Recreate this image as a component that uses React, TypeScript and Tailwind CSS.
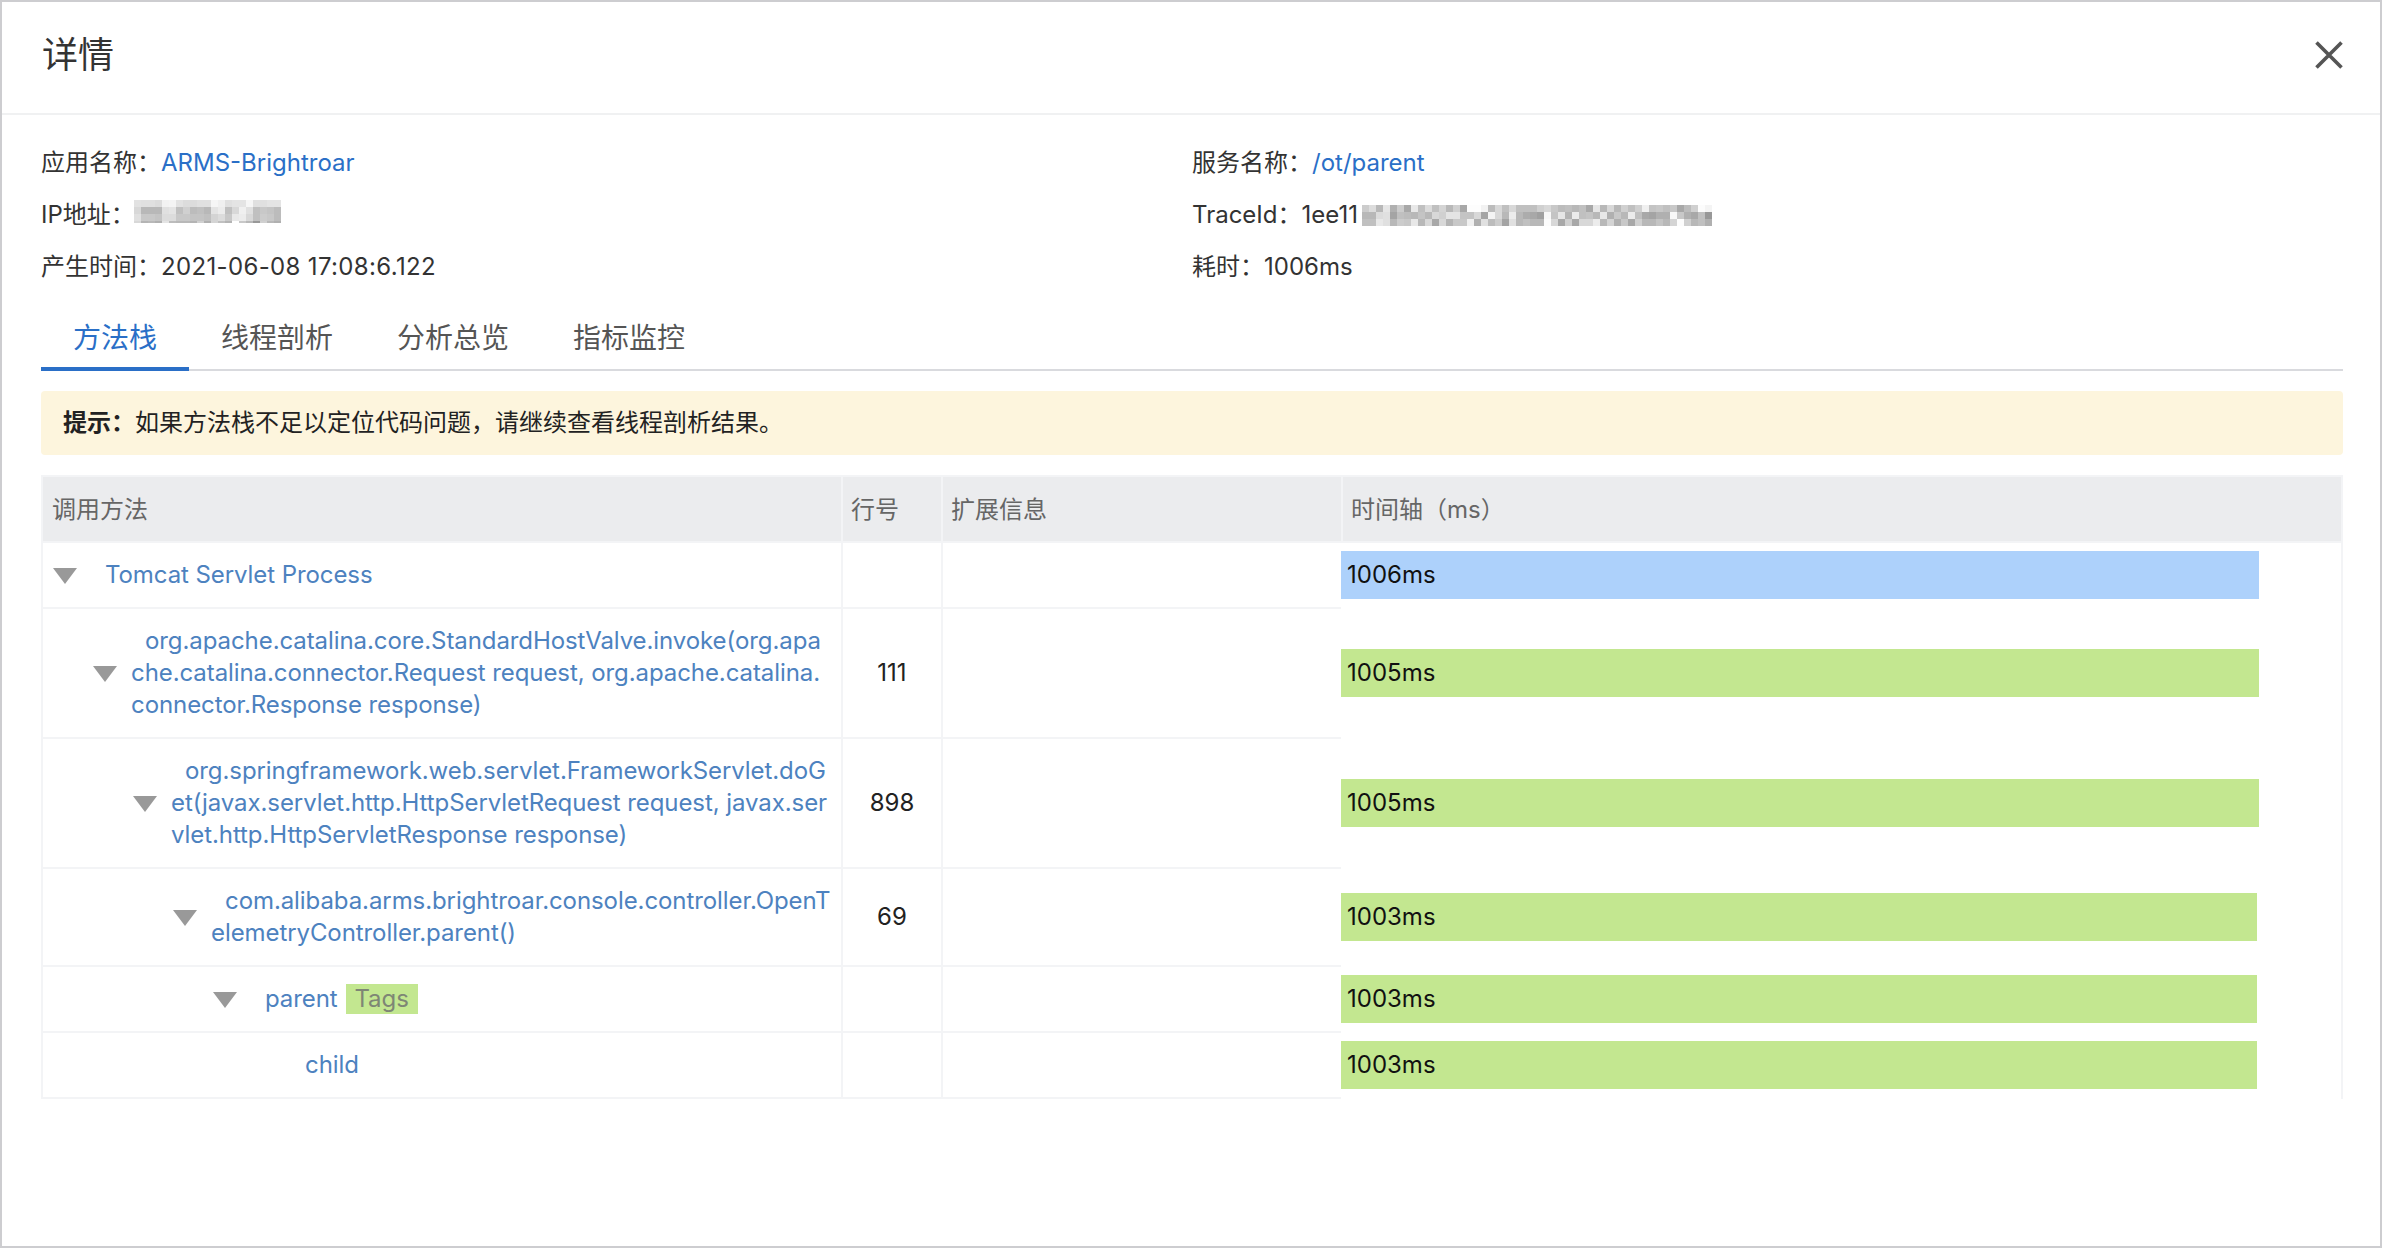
import React from "react";

const ipMosaic = [
  [0xe2, 0xe0, 0xe0, 0xdc, 0xf2, 0xf4, 0xe2, 0xdc, 0xdc, 0xe0, 0xe0, 0xf6, 0xf0, 0xe0, 0xe4, 0xe4, 0xf6, 0xe0, 0xe0, 0xe4, 0xe4],
  [0xd8, 0xb8, 0xb8, 0xb8, 0xe0, 0xe4, 0xc0, 0xd0, 0xbc, 0xc0, 0xb8, 0xe4, 0xec, 0xc0, 0xd8, 0xf0, 0xe0, 0xc0, 0xc8, 0xc4, 0xbc],
  [0xe0, 0xc8, 0xc8, 0xc4, 0xdc, 0xdc, 0xc8, 0xc8, 0xc4, 0xc4, 0xc0, 0xd4, 0xdc, 0xc8, 0xe8, 0xec, 0xd8, 0xc0, 0xcc, 0xc8, 0xbc],
];

// thin darker strip under the IP mosaic
const ipFringe = [0xd8, 0xb4, 0xb8, 0xb0, 0xe4, 0xbc, 0xb8, 0xb8, 0xb4, 0xd0, 0xb0, 0xd4, 0xc0, 0xb4, 0xff, 0xc8, 0xb8, 0x98, 0xd0, 0xb8, 0xb0];

const traceMosaic = [
  [0xcc, 0xdc, 0xb8, 0xe6, 0xb0, 0xcc, 0xa8, 0xe8, 0xc0, 0xdc, 0xc0, 0xd4, 0xb8, 0xd0, 0xa8, 0xfd, 0xfd, 0xf2, 0xbc, 0xd8, 0xc0, 0xd8, 0xc0, 0xc0, 0xc0, 0xd0, 0xd8, 0xc8, 0xbc, 0xc0, 0xb8, 0xc0, 0xa8, 0xe6, 0xb8, 0xd8, 0xb8, 0xd0, 0xc0, 0xd0, 0xf0, 0xc4, 0xc8, 0xc0, 0xc8, 0xa8, 0xbc, 0xd0, 0xfc, 0xf4],
  [0xb8, 0xb8, 0xdc, 0xe0, 0xa4, 0xc0, 0xbc, 0xb8, 0xc4, 0xb8, 0xd8, 0xd0, 0xe4, 0xe4, 0xc4, 0xc4, 0xd8, 0xa4, 0xf4, 0xd8, 0xb8, 0xec, 0xb8, 0xac, 0xa8, 0xa0, 0xf8, 0xc4, 0xe6, 0xb4, 0xec, 0xc0, 0xc4, 0xb8, 0xe8, 0xb0, 0xc8, 0xb8, 0xec, 0xc0, 0xa8, 0xa4, 0xb0, 0xb0, 0xf8, 0xc8, 0xb0, 0xa8, 0xc0, 0x98],
  [0xc0, 0xc0, 0xe8, 0xe0, 0xb8, 0xcc, 0xc8, 0xe8, 0xb8, 0xd8, 0xa8, 0xd8, 0xb4, 0xc8, 0xc8, 0xf0, 0xb0, 0xe0, 0xbc, 0xcc, 0xa4, 0xe0, 0xb8, 0xc0, 0xb8, 0xb8, 0xfc, 0xd8, 0xa8, 0xd0, 0xa8, 0xd8, 0xd8, 0xec, 0xb8, 0xd4, 0xb0, 0xc8, 0xa8, 0xd0, 0xb8, 0xb8, 0xc4, 0xb8, 0xd4, 0xfc, 0xd0, 0xb8, 0xc0, 0xb0],
];

const rows = [
  { pad: "pl-[10px]", lines: ["Tomcat Servlet Process"], arrow: true, no: "", ms: "1006ms", bar: "w-[918px] bg-[#add1fb]" },
  {
    pad: "pl-[50px]",
    lines: [
      "org.apache.catalina.core.StandardHostValve.invoke(org.apa",
      "che.catalina.connector.Request request, org.apache.catalina.",
      "connector.Response response)",
    ],
    arrow: true,
    no: "111",
    ms: "1005ms",
    bar: "w-[918px] bg-[#c3e790]",
  },
  {
    pad: "pl-[90px]",
    lines: [
      "org.springframework.web.servlet.FrameworkServlet.doG",
      "et(javax.servlet.http.HttpServletRequest request, javax.ser",
      "vlet.http.HttpServletResponse response)",
    ],
    arrow: true,
    no: "898",
    ms: "1005ms",
    bar: "w-[918px] bg-[#c3e790]",
  },
  {
    pad: "pl-[130px]",
    lines: ["com.alibaba.arms.brightroar.console.controller.OpenT", "elemetryController.parent()"],
    arrow: true,
    no: "69",
    ms: "1003ms",
    bar: "w-[916px] bg-[#c3e790]",
  },
  { pad: "pl-[170px]", lines: ["parent"], arrow: true, tag: "Tags", no: "", ms: "1003ms", bar: "w-[916px] bg-[#c3e790]" },
  { pad: "pl-[210px]", lines: ["child"], arrow: false, no: "", ms: "1003ms", bar: "w-[916px] bg-[#c3e790]" },
];

const tabs = ["方法栈", "线程剖析", "分析总览", "指标监控"];

// pixelated bit of the screenshot, drawn from the grey values above
function Mosaic({ data, fringe, className }: { data: number[][]; fringe?: number[]; className: string }) {
  const cols = data[0].length;
  const h = fringe ? 23 : 21;
  return (
    <svg className={className} width={cols * 7} height={h} viewBox={`0 0 ${cols * 7} ${h}`} shapeRendering="crispEdges">
      {data.map((row, y) =>
        row.map((v, x) => <rect key={`${x}-${y}`} x={x * 7} y={y * 7} width={7} height={7} fill={`rgb(${v},${v},${v})`} />)
      )}
      {fringe && fringe.map((v, x) => <rect key={x} x={x * 7} y={21} width={7} height={2} fill={`rgb(${v},${v},${v})`} />)}
    </svg>
  );
}

function Arrow() {
  return (
    <svg className="mt-[2px] mr-[14px] shrink-0" width="24" height="16" viewBox="0 0 24 16">
      <polygon points="0,0 24,0 12,16" fill="#999999" />
    </svg>
  );
}

export default function App() {
  return (
    <div className="w-[2382px] h-[1248px] border-2 border-[#cdcdd0] bg-white text-[24px] leading-[32px] text-[#333333] font-['Inter','Noto_Sans_CJK_SC',sans-serif] overflow-hidden">
      {/* Header */}
      <div className="h-[113px] pb-[5px] pl-[40px] pr-[37px] flex items-center justify-between border-b-2 border-[#f0f1f2]">
        <span className="text-[36px] leading-[48px] text-[#333333]">详情</span>
        <svg width="28" height="28" viewBox="0 0 28 28">
          <path d="M1.5 1.5L26.5 26.5M26.5 1.5L1.5 26.5" stroke="#555555" strokeWidth="3.6" fill="none" />
        </svg>
      </div>

      <div className="pl-[39px] pr-[37px]">
        {/* Info */}
        <div className="pt-[22px] grid grid-cols-[1151px_1fr] auto-rows-[52px] items-center">
          <div>
            应用名称：<span className="text-[#2a6fc7]">ARMS-Brightroar</span>
          </div>
          <div>
            服务名称：<span className="text-[#2a6fc7]">/ot/parent</span>
          </div>
          <div className="flex items-center">
            IP地址：
            <Mosaic data={ipMosaic} fringe={ipFringe} className="-ml-px mb-[7px]" />
          </div>
          <div className="flex items-center">
            TraceId：1ee11
            <Mosaic data={traceMosaic} className="ml-1" />
          </div>
          <div>
            产生时间：<span className="tracking-[0.35px]">2021-06-08 17:08:6.122</span>
          </div>
          <div>耗时：1006ms</div>
        </div>

        {/* Tabs */}
        <div className="mt-[10px] h-[68px] flex border-b-2 border-[#d9dade]">
          {tabs.map((t, i) => (
            <div
              key={t}
              className={
                i === 0
                  ? "h-[68px] px-8 pt-[6px] flex items-center border-b-4 border-[#2a6fc7] text-[28px] text-[#2a6fc7]"
                  : "h-[68px] px-8 pt-[6px] flex items-center border-b-4 border-transparent text-[28px] text-[#555555]"
              }
            >
              {t}
            </div>
          ))}
        </div>

        {/* Notice */}
        <div className="mt-5 h-16 px-[22px] flex items-center rounded bg-[#fdf5dd] text-[#222222]">
          <span className="font-bold">提示：</span>如果方法栈不足以定位代码问题，请继续查看线程剖析结果。
        </div>

        {/* Table */}
        <div className="mt-5 border-l-2 border-t-2 border-[#f3f4f6]">
          <div className="grid grid-cols-[800px_100px_400px_1000px] text-[#666666]">
            <div className="h-[66px] px-[9px] pt-px flex items-center bg-[#ebecee] border-r-2 border-b-2 border-[#f3f4f6]">调用方法</div>
            <div className="h-[66px] px-2 pt-px flex items-center bg-[#ebecee] border-r-2 border-b-2 border-[#f3f4f6]">行号</div>
            <div className="h-[66px] px-[8px] pt-px flex items-center bg-[#ebecee] border-r-2 border-b-2 border-[#f3f4f6]">扩展信息</div>
            <div className="h-[66px] px-[8px] pt-px flex items-center bg-[#ebecee] border-r-2 border-b-2 border-[#f3f4f6]">时间轴（ms）</div>
          </div>
          {rows.map((r) => (
            <div key={r.ms + r.lines[0]} className="grid grid-cols-[800px_100px_400px_1000px]">
              <div className={`${r.pad} py-4 flex items-center border-r-2 border-b-2 border-[#f3f4f6] text-[#4d82bf] tracking-[-0.08px] whitespace-nowrap`}>
                {r.arrow ? <Arrow /> : <span className="w-[38px] shrink-0" />}
                <div>
                  {r.lines.map((l, i) => (
                    <div key={l} className={i === 0 ? "pl-[14px] flex items-center" : ""}>
                      {l}
                      {r.tag && (
                        <span className="ml-2 w-[72px] h-[30px] flex items-center justify-center bg-[#c3e790] text-[#7e8675]">{r.tag}</span>
                      )}
                    </div>
                  ))}
                </div>
              </div>
              <div className="flex items-center justify-center border-r-2 border-b-2 border-[#f3f4f6] text-[#222222]">{r.no}</div>
              <div className="border-b-2 border-[#f3f4f6]" />
              <div className="relative -ml-[2px] bg-white flex items-center pb-[2px] border-r-2 border-[#f3f4f6] text-[#111111]">
                <div className={`${r.bar} h-12 pl-[6px] flex items-center`}>{r.ms}</div>
              </div>
            </div>
          ))}
        </div>
      </div>
    </div>
  );
}
